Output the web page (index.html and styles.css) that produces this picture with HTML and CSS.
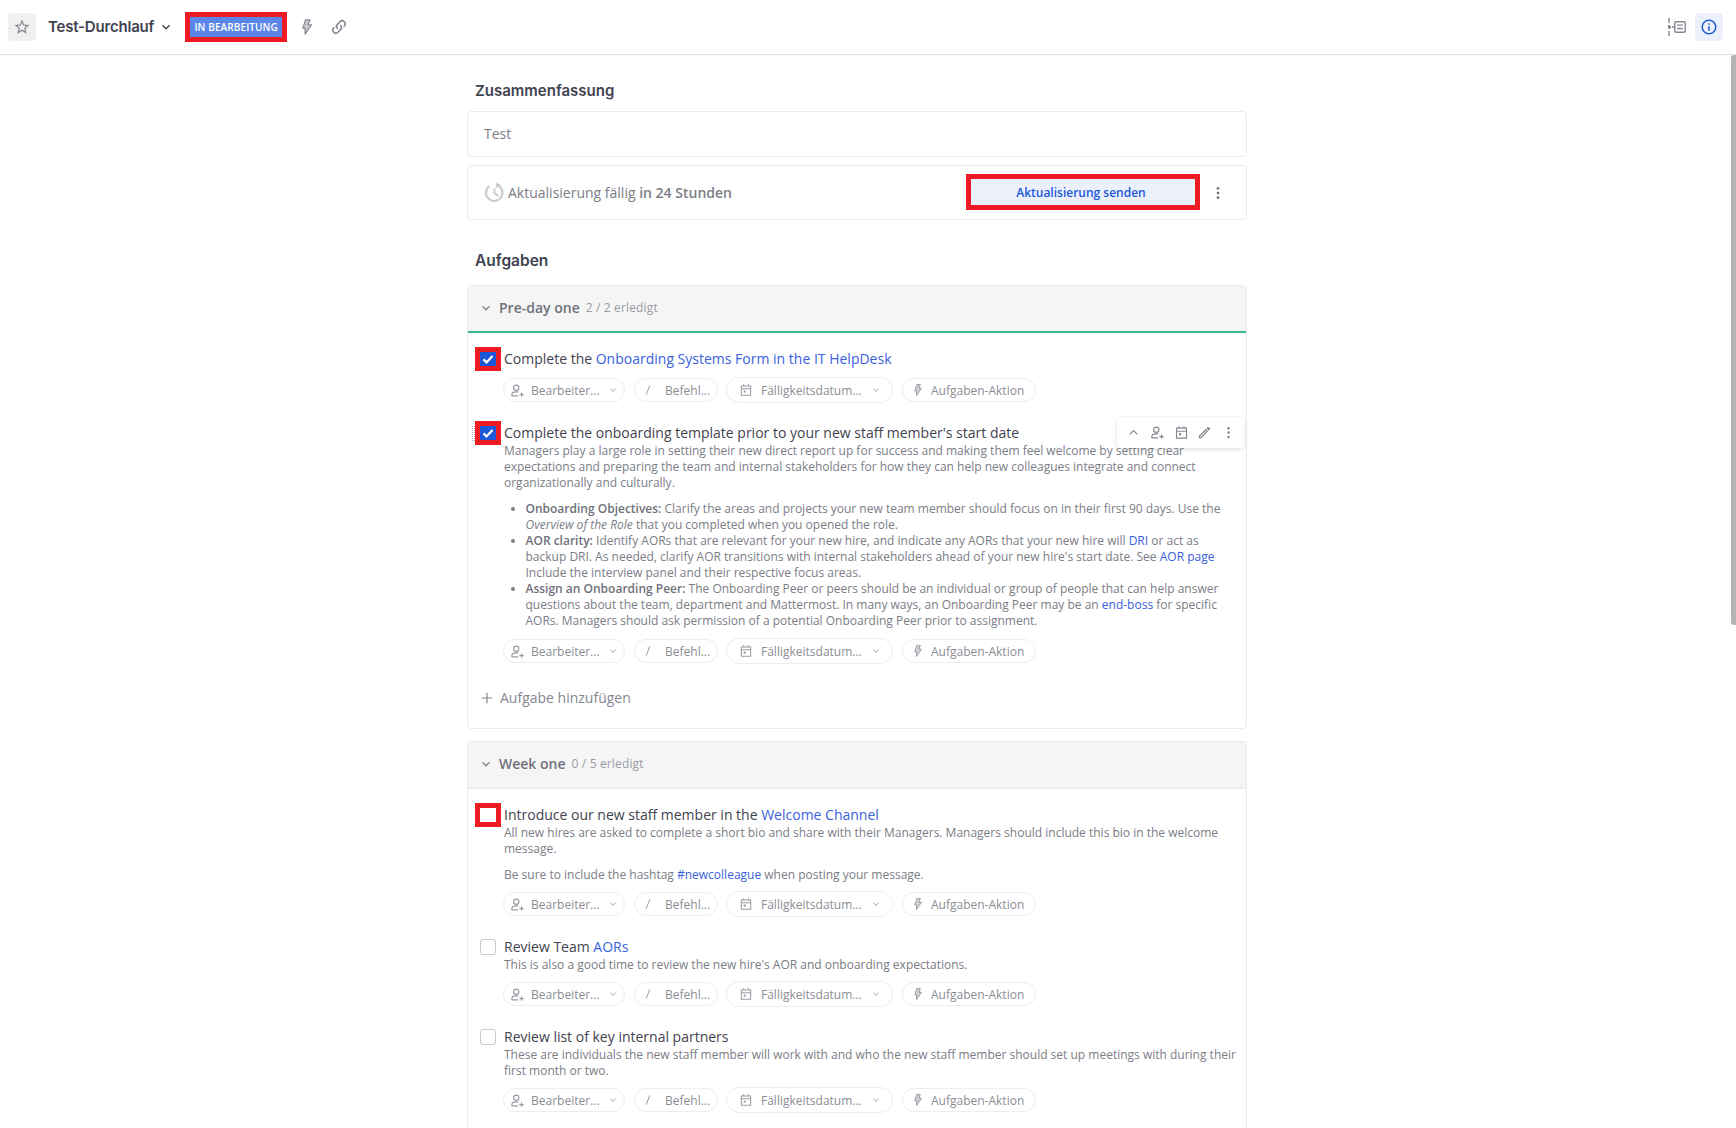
FILE: index.html
```html
<!DOCTYPE html>
<html lang="de">
<head>
<meta charset="utf-8">
<title>Test-Durchlauf</title>
<link rel="stylesheet" href="styles.css">
</head>
<body>
<svg class="defs" width="0" height="0" aria-hidden="true">
  <symbol id="i-chev" viewBox="0 0 24 24"><path fill="currentColor" d="M7.41 8.58L12 13.17l4.59-4.59L18 10l-6 6-6-6z"/></symbol>
  <symbol id="i-star" viewBox="0 0 24 24"><path fill="currentColor" d="M12 15.39l-3.76 2.27.99-4.28-3.32-2.88 4.38-.37L12 6.09l1.71 4.04 4.38.37-3.32 2.88.99 4.28M22 9.24l-7.19-.61L12 2 9.19 8.63 2 9.24l5.45 4.73L5.82 21 12 17.27 18.18 21l-1.64-7.03L22 9.24z"/></symbol>
  <symbol id="i-flash" viewBox="0 0 24 24"><path fill="currentColor" fill-opacity=".45" stroke="currentColor" stroke-width="1.6" stroke-linejoin="round" d="M10 2.500h6l-2.500 6.500H18L9.500 21.500V13.500H6.500z"/></symbol>
  <symbol id="i-link" viewBox="0 0 24 24"><path fill="currentColor" d="M10.59 13.41c.41.39.41 1.03 0 1.42-.39.39-1.03.39-1.42 0a5.003 5.003 0 0 1 0-7.07l3.54-3.54a5.003 5.003 0 0 1 7.07 0 5.003 5.003 0 0 1 0 7.07l-1.49 1.49c.01-.82-.12-1.64-.4-2.42l.47-.48a2.982 2.982 0 0 0 0-4.24 2.982 2.982 0 0 0-4.24 0l-3.53 3.53a2.982 2.982 0 0 0 0 4.24m2.82-4.24c.39-.39 1.03-.39 1.42 0a5.003 5.003 0 0 1 0 7.07l-3.54 3.54a5.003 5.003 0 0 1-7.07 0 5.003 5.003 0 0 1 0-7.07l1.49-1.49c-.01.82.12 1.64.4 2.43l-.47.47a2.982 2.982 0 0 0 0 4.24 2.982 2.982 0 0 0 4.24 0l3.53-3.53a2.982 2.982 0 0 0 0-4.24.973.973 0 0 1 0-1.42z"/></symbol>
  <symbol id="i-info" viewBox="0 0 24 24"><path fill="currentColor" d="M11 9h2V7h-2m1 13c-4.41 0-8-3.59-8-8s3.59-8 8-8 8 3.59 8 8-3.59 8-8 8m0-18A10 10 0 0 0 2 12a10 10 0 0 0 10 10 10 10 0 0 0 10-10A10 10 0 0 0 12 2m-1 15h2v-6h-2v6z"/></symbol>
  <symbol id="i-timeline" viewBox="0 0 18 18"><path fill="none" stroke="currentColor" stroke-width="1.4" d="M1 0v5M1 7v4M1 13v5"/><circle cx="1.5" cy="9" r="1.6" fill="currentColor"/><path fill="none" stroke="currentColor" stroke-width="1.4" d="M4 9h2"/><rect x="6.7" y="3.7" width="10.6" height="10.6" rx="1.5" fill="none" stroke="currentColor" stroke-width="1.4"/><path fill="none" stroke="currentColor" stroke-width="1.3" d="M9 7.2h6M9 10.5h6"/></symbol>
  <symbol id="i-update" viewBox="0 0 24 24"><path fill="none" stroke="currentColor" stroke-width="2.400" d="M14.500 3.300A9.400 9.400 0 1 1 6 4.800"/><path fill="currentColor" d="M13.500 0.300l6 3.500-6 3.200z"/><path fill="none" stroke="currentColor" stroke-width="2.200" d="M12 7.500V13l4.500 2.800"/></symbol>
  <symbol id="i-user" viewBox="0 0 24 24"><circle cx="10" cy="7.500" r="4.200" fill="none" stroke="currentColor" stroke-width="1.800"/><path fill="none" stroke="currentColor" stroke-width="1.800" d="M3 21v-2.500c0-2.800 3.600-4.400 7-4.400 1.100 0 2.200.15 3.200.45M3 20.600h10M18.500 15v7M15 18.500h7"/></symbol>
  <symbol id="i-slash" viewBox="0 0 24 24"><path fill="none" stroke="currentColor" stroke-width="1.700" d="M15 4L9 20"/></symbol>
  <symbol id="i-cal" viewBox="0 0 24 24"><path fill="none" stroke="currentColor" stroke-width="1.800" d="M4 5h16v16H4zM4 10h16M8 2v4M16 2v4"/><rect x="8" y="13" width="3.500" height="3.500" fill="currentColor"/></symbol>
  <symbol id="i-pencil" viewBox="0 0 24 24"><path fill="currentColor" d="M14.060 9l.94.94L5.920 19H5v-.92L14.060 9m3.600-6c-.25 0-.51.1-.7.29l-1.830 1.830 3.750 3.750 1.830-1.830c.39-.39.39-1.040 0-1.410l-2.340-2.340c-.2-.2-.45-.29-.71-.29m-3.600 3.190L3 17.250V21h3.750L17.810 9.940l-3.750-3.750z"/></symbol>
  <symbol id="i-kebab" viewBox="0 0 24 24"><circle cx="12" cy="5" r="2" fill="currentColor"/><circle cx="12" cy="12" r="2" fill="currentColor"/><circle cx="12" cy="19" r="2" fill="currentColor"/></symbol>
  <symbol id="i-plus" viewBox="0 0 24 24"><path fill="none" stroke="currentColor" stroke-width="1.800" d="M12 4v16M4 12h16"/></symbol>
  <symbol id="i-check" viewBox="0 0 16 16"><path fill="none" stroke="#fff" stroke-width="2.200" d="M3.500 7.400l3 3 6-6.400"/></symbol>
  <symbol id="i-up" viewBox="0 0 24 24"><path fill="none" stroke="currentColor" stroke-width="2" d="M6 15l6-6 6 6"/></symbol>
</svg>

<header class="topbar">
  <div class="topbar-left">
    <button class="star-btn"><svg class="ic18"><use href="#i-star"/></svg></button>
    <h1 class="run-title">Test-Durchlauf</h1>
    <svg class="ic16 title-chev"><use href="#i-chev"/></svg>
    <span class="badge">IN BEARBEITUNG</span>
    <svg class="ic18 top-flash"><use href="#i-flash"/></svg>
    <svg class="ic18 top-link"><use href="#i-link"/></svg>
  </div>
  <div class="topbar-right">
    <svg class="ic18 top-timeline"><use href="#i-timeline"/></svg>
    <button class="info-btn"><svg class="ic18"><use href="#i-info"/></svg></button>
  </div>
</header>

<main class="main">
  <h2 class="heading">Zusammenfassung</h2>
  <div class="box summary">Test</div>
  <div class="box update">
    <svg class="update-icon"><use href="#i-update"/></svg>
    <span class="update-text">Aktualisierung fällig <b>in 24 Stunden</b></span>
    <button class="send-btn">Aktualisierung senden</button>
    <svg class="ic16 update-kebab"><use href="#i-kebab"/></svg>
  </div>

  <h2 class="heading tasks-heading">Aufgaben</h2>

  <section class="card">
    <div class="card-head green">
      <svg class="ic16"><use href="#i-chev"/></svg>
      <span class="card-title">Pre-day one</span>
      <span class="card-count">2 / 2 erledigt</span>
    </div>
    <div class="card-body">
      <div class="item">
        <span class="cb checked mark"><svg class="ic16"><use href="#i-check"/></svg></span>
        <div class="item-title">Complete the <a href="#">Onboarding Systems Form in the IT HelpDesk</a></div>
        <div class="chips">
          <span class="chip c-user"><svg class="ic15"><use href="#i-user"/></svg>Bearbeiter...<svg class="ic12"><use href="#i-chev"/></svg></span>
          <span class="chip c-cmd"><svg class="ic14"><use href="#i-slash"/></svg>Befehl...</span>
          <span class="chip c-date"><svg class="ic14"><use href="#i-cal"/></svg>Fälligkeitsdatum...<svg class="ic12"><use href="#i-chev"/></svg></span>
          <span class="chip c-act"><svg class="ic14"><use href="#i-flash"/></svg>Aufgaben-Aktion</span>
        </div>
      </div>

      <div class="item">
        <span class="drag"></span>
        <span class="cb checked mark"><svg class="ic16"><use href="#i-check"/></svg></span>
        <div class="item-title">Complete the onboarding template prior to your new staff member's start date</div>
        <div class="desc">
          <p>Managers play a large role in setting their new direct report up for success and making them feel welcome by setting clear expectations and preparing the team and internal stakeholders for how they can help new colleagues integrate and connect organizationally and culturally.</p>
          <ul>
            <li><b>Onboarding Objectives:</b> Clarify the areas and projects your new team member should focus on in their first 90 days. Use the <i>Overview of the Role</i> that you completed when you opened the role.</li>
            <li><b>AOR clarity:</b> Identify AORs that are relevant for your new hire, and indicate any AORs that your new hire will <a href="#">DRI</a> or act as backup DRI. As needed, clarify AOR transitions with internal stakeholders ahead of your new hire's start date. See <a href="#">AOR page</a><br>Include the interview panel and their respective focus areas.</li>
            <li><b>Assign an Onboarding Peer:</b> The Onboarding Peer or peers should be an individual or group of people that can help answer questions about the team, department and Mattermost. In many ways, an Onboarding Peer may be an <a href="#">end-boss</a> for specific AORs. Managers should ask permission of a potential Onboarding Peer prior to assignment.</li>
          </ul>
        </div>
        <div class="chips">
          <span class="chip c-user"><svg class="ic15"><use href="#i-user"/></svg>Bearbeiter...<svg class="ic12"><use href="#i-chev"/></svg></span>
          <span class="chip c-cmd"><svg class="ic14"><use href="#i-slash"/></svg>Befehl...</span>
          <span class="chip c-date"><svg class="ic14"><use href="#i-cal"/></svg>Fälligkeitsdatum...<svg class="ic12"><use href="#i-chev"/></svg></span>
          <span class="chip c-act"><svg class="ic14"><use href="#i-flash"/></svg>Aufgaben-Aktion</span>
        </div>
        <div class="hover-bar">
          <svg class="ic15"><use href="#i-up"/></svg>
          <svg class="ic15"><use href="#i-user"/></svg>
          <svg class="ic15"><use href="#i-cal"/></svg>
          <svg class="ic15"><use href="#i-pencil"/></svg>
          <svg class="ic15"><use href="#i-kebab"/></svg>
        </div>
      </div>

      <div class="add-task"><svg class="ic16"><use href="#i-plus"/></svg>Aufgabe hinzufügen</div>
    </div>
  </section>

  <section class="card second">
    <div class="card-head gray">
      <svg class="ic16"><use href="#i-chev"/></svg>
      <span class="card-title">Week one</span>
      <span class="card-count">0 / 5 erledigt</span>
    </div>
    <div class="card-body">
      <div class="item">
        <span class="cb mark"></span>
        <div class="item-title">Introduce our new staff member in the <a href="#">Welcome Channel</a></div>
        <div class="desc">
          <p>All new hires are asked to complete a short bio and share with their Managers. Managers should include this bio in the welcome message.</p>
          <p class="gap">Be sure to include the hashtag <a href="#">#newcolleague</a> when posting your message.</p>
        </div>
        <div class="chips">
          <span class="chip c-user"><svg class="ic15"><use href="#i-user"/></svg>Bearbeiter...<svg class="ic12"><use href="#i-chev"/></svg></span>
          <span class="chip c-cmd"><svg class="ic14"><use href="#i-slash"/></svg>Befehl...</span>
          <span class="chip c-date"><svg class="ic14"><use href="#i-cal"/></svg>Fälligkeitsdatum...<svg class="ic12"><use href="#i-chev"/></svg></span>
          <span class="chip c-act"><svg class="ic14"><use href="#i-flash"/></svg>Aufgaben-Aktion</span>
        </div>
      </div>

      <div class="item">
        <span class="cb"></span>
        <div class="item-title">Review Team <a href="#">AORs</a></div>
        <div class="desc"><p>This is also a good time to review the new hire's AOR and onboarding expectations.</p></div>
        <div class="chips">
          <span class="chip c-user"><svg class="ic15"><use href="#i-user"/></svg>Bearbeiter...<svg class="ic12"><use href="#i-chev"/></svg></span>
          <span class="chip c-cmd"><svg class="ic14"><use href="#i-slash"/></svg>Befehl...</span>
          <span class="chip c-date"><svg class="ic14"><use href="#i-cal"/></svg>Fälligkeitsdatum...<svg class="ic12"><use href="#i-chev"/></svg></span>
          <span class="chip c-act"><svg class="ic14"><use href="#i-flash"/></svg>Aufgaben-Aktion</span>
        </div>
      </div>

      <div class="item">
        <span class="cb"></span>
        <div class="item-title">Review list of key internal partners</div>
        <div class="desc"><p>These are individuals the new staff member will work with and who the new staff member should set up meetings with during their first month or two.</p></div>
        <div class="chips">
          <span class="chip c-user"><svg class="ic15"><use href="#i-user"/></svg>Bearbeiter...<svg class="ic12"><use href="#i-chev"/></svg></span>
          <span class="chip c-cmd"><svg class="ic14"><use href="#i-slash"/></svg>Befehl...</span>
          <span class="chip c-date"><svg class="ic14"><use href="#i-cal"/></svg>Fälligkeitsdatum...<svg class="ic12"><use href="#i-chev"/></svg></span>
          <span class="chip c-act"><svg class="ic14"><use href="#i-flash"/></svg>Aufgaben-Aktion</span>
        </div>
      </div>
    </div>
  </section>
</main>
<div class="scroll-thumb"></div>
</body>
</html>
```
FILE: styles.css
```css
* { box-sizing: border-box; }
html, body { margin: 0; height: 100%; }
body {
  overflow: hidden;
  background: #fff;
  color: #3f4350;
  font-family: "Open Sans", sans-serif;
  font-size: 14px;
  position: relative;
}
.defs { position: absolute; }
svg { display: block; flex: none; }
.ic12 { width: 12px; height: 12px; }
.ic14 { width: 14px; height: 14px; }
.ic15 { width: 15px; height: 15px; }
.ic16 { width: 16px; height: 16px; }
.ic18 { width: 18px; height: 18px; }
button { font: inherit; border: 0; padding: 0; }
a { color: #3a62dc; text-decoration: none; }

/* top bar */
.topbar {
  height: 55px;
  border-bottom: 1px solid #dfdfe1;
  display: flex;
  align-items: center;
  justify-content: space-between;
  padding: 0 13px 0 8px;
}
.topbar-left, .topbar-right { display: flex; align-items: center; }
.star-btn, .info-btn {
  width: 28px; height: 28px; border-radius: 4px;
  display: flex; align-items: center; justify-content: center;
}
.star-btn { background: #f0f0f1; color: #85878f; }
.info-btn { background: #ebf0fb; color: #1c58d9; }
.run-title {
  margin: 0 0 0 12px;
  font: 600 15px/24px Inter, sans-serif;
  letter-spacing: -0.2px;
  color: #3f4350;
}
.title-chev { margin-left: 4px; color: #3f4350; }
.badge {
  margin-left: 16px;
  width: 92px; height: 20px;
  background: #5b86e8;
  color: #fff;
  font: 600 10px/20px "Open Sans", sans-serif;
  letter-spacing: .1px;
  text-align: center;
  outline: 5px solid #ed1c24;
}
.top-flash { margin-left: 16px; color: #85878f; }
.top-link { margin-left: 14px; color: #85878f; }
.top-timeline { color: #85878f; margin-right: 9px; }

/* content */
.main { width: 780px; margin-left: 467px; padding-top: 24px; }
.heading {
  margin: 0 0 8px 8px;
  font: 600 15px/24px Inter, sans-serif;
  color: #3f4350;
}
.tasks-heading { margin-top: 29px; margin-bottom: 12px; font-size: 15.500px; }
.box { border: 1px solid #ebebec; border-radius: 4px; background: #fff; }
.summary { height: 46px; padding: 0 16px; line-height: 44px; color: #7b7d86; }
.update {
  height: 55px; margin-top: 8px;
  display: flex; align-items: center;
  padding: 0 20px 0 16px;
  color: #7b7d86;
}
.update-icon { width: 21px; height: 21px; color: #cbcbce; margin-right: 3px; }
.update-text b { font-weight: 600; }
.update-text { flex: 1; }
.send-btn {
  width: 224px; height: 26px;
  background: #ebf0fb;
  color: #1c58d9;
  font-size: 12px;
  font-weight: 600;
  padding-right: 4px;
  margin-bottom: 1px;
  outline: 5px solid #ed1c24;
  margin-right: 15px;
}
.update-kebab { color: #6f717b; }

.card { border: 1px solid #ebebec; border-radius: 4px; }
.second { margin-top: 12px; border-bottom: 0; }
.card-head {
  height: 47px;
  background: #f5f5f6;
  display: flex; align-items: center;
  padding: 0 0 2px 10px;
  color: #85878f;
  border-radius: 4px 4px 0 0;
}
.green { border-bottom: 2px solid #3db887; }
.gray { border-bottom: 2px solid #ededee; }
.card-title { margin-left: 5px; font-weight: 600; color: #6f717b; }
.card-count { margin-left: 6px; font-size: 12px; letter-spacing: .15px; color: #9a9ba2; }
.card-body { padding: 16px 8px 0 12px; }
.second .card-body { padding-bottom: 40px; }

.item {
  position: relative;
  display: grid;
  grid-template-columns: 16px 1fr;
  column-gap: 8px;
  margin-bottom: 20px;
}
.item-title { line-height: 20px; color: #3f4350; }
.cb {
  width: 16px; height: 16px; margin-top: 2px;
  border: 1px solid #c9cacd;
  border-radius: 3px;
  background: #fff;
}
.checked { border: 0; background: #1c58d9; border-radius: 0; }
.mark {
  height: 14px; margin-top: 3px;
  border: 0; border-radius: 0;
  outline: 5px solid #ed1c24;
  overflow: hidden;
}
.drag {
  position: absolute; left: -8px; top: 3px;
  width: 3px; height: 15px;
  border-left: 1px dotted #a9aab0;
  border-right: 1px dotted #a9aab0;
}
.desc {
  grid-column: 2;
  font-size: 12px;
  line-height: 16px;
  color: #7b7d86;
}
.desc p { margin: 0; }
.desc .gap { margin-top: 10px; }
.desc ul { margin: 10px 0 1px; padding-left: 21.500px; }
.desc b { font-weight: 600; color: #6f717b; }
.chips {
  grid-column: 2;
  display: flex; align-items: center; gap: 8px;
  margin-top: 8px;
  height: 26px;
  margin-left: -1px;
}
.chip {
  height: 24px;
  display: flex; align-items: center;
  border: 1px solid #ededee;
  border-radius: 13px;
  font-size: 12px;
  color: #8c8d94;
  white-space: nowrap;
}
.chip svg { color: #9a9ba2; }
.c-user { width: 122px; padding-left: 6px; gap: 6px; }
.c-user .ic12 { margin-left: 1px; color: #bcbdc1; }
.c-cmd { width: 84px; margin-left: 1px; padding-left: 6px; gap: 10px; }
.c-date { width: 167px; height: 26px; padding-left: 12px; gap: 8px; }
.c-date .ic12 { margin-left: 0; color: #bcbdc1; }
.c-act { width: 134px; margin-left: 1px; padding-left: 8px; gap: 6px; }
.hover-bar {
  position: absolute; right: -6px; top: -6px;
  width: 127px; height: 31px;
  background: #fff;
  border-radius: 4px;
  box-shadow: 0 1px 4px rgba(0,0,0,.14);
  display: flex; align-items: center; justify-content: space-between;
  padding: 0 8px 0 9px;
  color: #85878f;
}
.add-task {
  display: flex; align-items: center; gap: 5px;
  margin: 24px 0 0 -1px;
  padding-bottom: 20px;
  line-height: 20px;
  color: #85878f;
}
.scroll-thumb {
  position: absolute; right: 0; top: 55px;
  width: 5px; height: 570px;
  background: #b4b4b8;
  border-radius: 3px 0 0 3px;
}
```
